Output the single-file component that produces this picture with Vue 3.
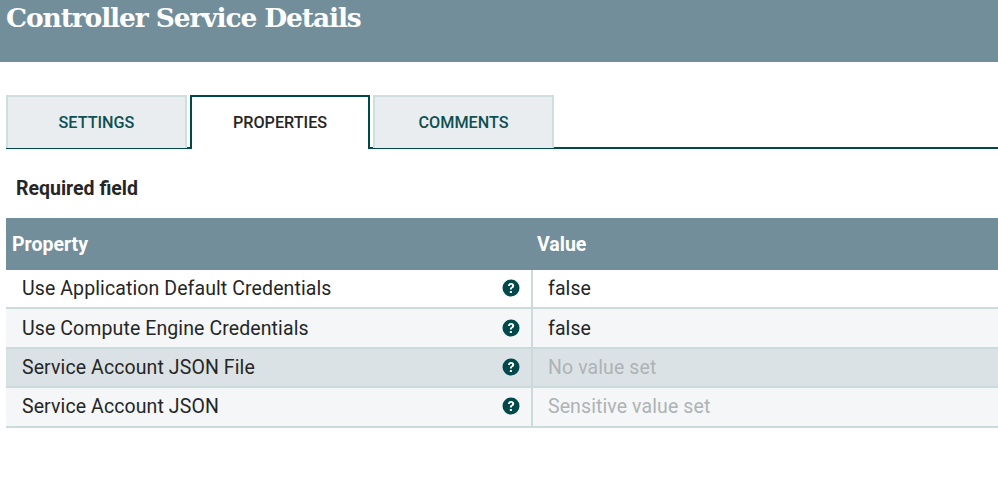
<script setup>
const rows = [
  { name: 'Use Application Default Credentials', value: 'false', muted: false, cls: 'odd' },
  { name: 'Use Compute Engine Credentials', value: 'false', muted: false, cls: 'even' },
  { name: 'Service Account JSON File', value: 'No value set', muted: true, cls: 'hover' },
  { name: 'Service Account JSON', value: 'Sensitive value set', muted: true, cls: 'even' }
]
const tabs = ['SETTINGS', 'PROPERTIES', 'COMMENTS']
</script>

<template>
  <div class="page">
    <header class="head"><h1>Controller Service Details</h1></header>
    <nav class="tabs">
      <div v-for="t in tabs" :key="t" class="tab" :class="{ active: t === 'PROPERTIES' }">{{ t }}</div>
    </nav>
    <div class="required">Required field</div>
    <section class="table">
      <div class="thead">
        <div class="c1">Property</div>
        <div class="c2">Value</div>
      </div>
      <div v-for="r in rows" :key="r.name" class="row" :class="r.cls">
        <div class="name">
          <span>{{ r.name }}</span>
          <svg class="help" viewBox="0 0 18 18" width="18" height="18">
            <circle cx="9" cy="9" r="8.500" fill="#004849" />
            <path d="M5.900 6.900C6 5.100 7.300 4 9.100 4c1.800 0 3.100 1.100 3.100 2.700 0 1.200-.7 1.800-1.500 2.300-.7.400-.9.700-.9 1.300v.3H7.900v-.5c0-1 .4-1.600 1.200-2.100.7-.4 1-.7 1-1.200 0-.6-.4-1-1-1-.7 0-1.100.4-1.200 1.100H5.900z" fill="#fff" />
            <rect x="7.800" y="11.900" width="2.100" height="2.100" rx=".3" fill="#fff" />
          </svg>
        </div>
        <div class="val" :class="{ muted: r.muted }">{{ r.value }}</div>
      </div>
    </section>
  </div>
</template>

<style>
html, body { margin: 0; background: #fff; overflow: hidden; }
</style>

<style scoped>
.page {
  width: 998px;
  height: 504px;
  overflow: hidden;
  font-family: Roboto, "Liberation Sans", sans-serif;
  color: #262626;
}
.head {
  height: 62px;
  background: #728e9b;
  padding-left: 6px;
  box-sizing: border-box;
}
h1 {
  margin: 0;
  font-family: "DejaVu Serif", serif;
  font-weight: 700;
  font-size: 26.5px;
  letter-spacing: -1.13px;
  line-height: 36px;
  color: #fff;
}
.tabs {
  display: flex;
  gap: 3px;
  margin: 33px 0 0 6px;
  height: 54px;
  box-sizing: border-box;
  border-bottom: 2px solid #004849;
}
.tab {
  width: 181px;
  height: 53px;
  box-sizing: border-box;
  background: #e9edf0;
  border: 2px solid #cfdfdf;
  border-bottom: 0;
  color: #0f5051;
  font-size: 16.2px;
  font-weight: 500;
  text-align: center;
  line-height: 51px;
}
.tab.active {
  height: 54px;
  background: #fff;
  border: 2px solid #004849;
  border-bottom: 0;
  color: #262626;
  width: 180px;
}
.required {
  margin: 29px 0 0 16px;
  font-size: 19.5px;
  font-weight: 700;
  line-height: 22px;
}
.table { margin: 18px 0 0 6px; }
.thead {
  display: flex;
  height: 52px;
  align-items: center;
  background: #728e9b;
  color: #fff;
  font-size: 19.5px;
  font-weight: 700;
}
.c1 { width: 525px; padding-left: 6px; box-sizing: border-box; }
.c2 { padding-left: 6px; }
.row {
  display: flex;
  height: 39.4px;
  box-sizing: border-box;
  border-bottom: 2px solid #ccdadb;
  font-size: 19.5px;
  letter-spacing: .1px;
}
.row.odd { background: #fff; }
.row.even { background: #f4f6f7; }
.row.hover { background: #dbe2e5; }
.name {
  width: 527px;
  box-sizing: border-box;
  display: flex;
  align-items: center;
  justify-content: space-between;
  padding: 0 11px 0 16px;
  border-right: 2px solid #ccdadb;
}
.help { flex: none; margin-top: -1px; }
.val {
  display: flex;
  align-items: center;
  padding-left: 15px;
}
.muted { color: #aeb3b5; }
</style>
